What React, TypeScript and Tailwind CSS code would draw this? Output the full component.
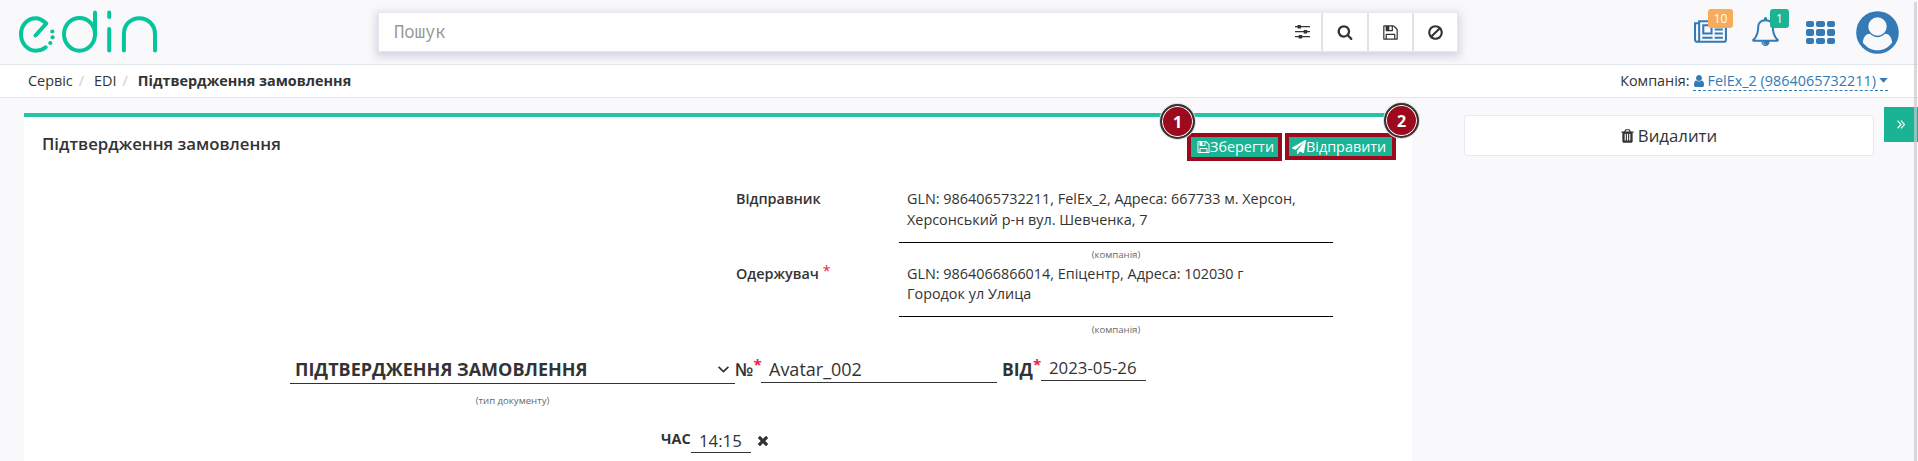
import React from "react";

const paths = {
  search: "M1216 832q0-185-131.500-316.500t-316.500-131.500-316.500 131.500-131.500 316.500 131.500 316.500 316.500 131.500 316.500-131.500 131.500-316.500zm512 832q0 52-38 90t-90 38q-54 0-90-38l-343-342q-179 124-399 124-143 0-273.500-55.500t-225-150-150-225-55.500-273.500 55.500-273.500 150-225 225-150 273.500-55.500 273.500 55.500 225 150 150 225 55.500 273.500q0 220-124 399l343 343q37 37 37 90z",
  save: "M384 1536h768v-384h-768v384zm896 0h128v-896q0-14-10-38.500t-20-34.500l-281-281q-10-10-34-20t-39-10v416q0 40-28 68t-68 28h-576q-40 0-68-28t-28-68v-416h-128v1280h128v-416q0-40 28-68t68-28h832q40 0 68 28t28 68v416zm-384-928v-320q0-13-9.500-22.500t-22.500-9.500h-192q-13 0-22.500 9.500t-9.500 22.500v320q0 13 9.500 22.500t22.500 9.500h192q13 0 22.500-9.500t9.500-22.500zm640 32v928q0 40-28 68t-68 28h-1344q-40 0-68-28t-28-68v-1344q0-40 28-68t68-28h928q40 0 88 20t76 48l280 280q28 28 48 76t20 88z",
  ban: "M1440 893q0-161-87-295l-754 753q137 89 297 89 111 0 211.500-43.500t173.500-116.500 116-174.500 43-212.500zm-999 299l755-754q-135-91-300-91-148 0-273 73t-198 199-73 274q0 162 89 299zm1223-299q0 157-61 300t-163.500 246-245 164-298.500 61-298.500-61-245-164-163.500-246-61-300 61-299.500 163.500-245.500 245-164 298.500-61 298.500 61 245 164 163.500 245.500 61 299.500z",
  news: "M1024 512h-384v384h384v-384zm128 640v128h-640v-128h640zm0-768v640h-640v-640h640zm640 768v128h-512v-128h512zm0-256v128h-512v-128h512zm0-256v128h-512v-128h512zm0-256v128h-512v-128h512zm-1536 960v-960h-128v960q0 26 19 45t45 19 45-19 19-45zm1664 0v-1088h-1536v1088q0 33-11 64h1483q26 0 45-19t19-45zm128-1216v1216q0 80-56 136t-136 56h-1664q-80 0-136-56t-56-136v-1088h256v-128h1792z",
  bell: "M912 1696q0-16-16-16-59 0-101.500-42.500t-42.500-101.500q0-16-16-16t-16 16q0 73 51.500 124.500t124.500 51.500q16 0 16-16zm-666-288h1300q-266-300-266-832 0-51-24-105t-69-103-121.500-80.500-169.500-31.500-169.500 31.500-121.500 80.500-69 103-24 105q0 532-266 832zm1482 0q0 52-38 90t-90 38h-448q0 106-75 181t-181 75-181-75-75-181h-448q-52 0-90-38t-38-90q50-42 91-88t85-119.500 74.500-158.500 50-206 19.500-260q0-152 117-282.500t307-158.500q-8-19-8-39 0-40 28-68t68-28 68 28 28 68q0 20-8 39 190 28 307 158.500t117 282.500q0 139 19.500 260t50 206 74.500 158.500 85 119.500 91 88z",
  user: "M1536 1399q0 109-62.500 187t-150.500 78h-854q-88 0-150.500-78t-62.500-187q0-85 8.500-160.500t31.500-152 58.500-131 94-89 134.500-34.500q131 128 313 128t313-128q76 0 134.500 34.500t94 89 58.500 131 31.500 152 8.500 160.500zm-256-887q0 159-112.500 271.500t-271.500 112.500-271.500-112.500-112.500-271.500 112.500-271.500 271.500-112.500 271.500 112.500 112.500 271.500z",
  trash: "M704 1376v-704q0-14-9-23t-23-9h-64q-14 0-23 9t-9 23v704q0 14 9 23t23 9h64q14 0 23-9t9-23zm256 0v-704q0-14-9-23t-23-9h-64q-14 0-23 9t-9 23v704q0 14 9 23t23 9h64q14 0 23-9t9-23zm256 0v-704q0-14-9-23t-23-9h-64q-14 0-23 9t-9 23v704q0 14 9 23t23 9h64q14 0 23-9t9-23zm-544-992h448l-48-117q-7-9-17-11h-317q-10 2-17 11zm928 32v64q0 14-9 23t-23 9h-96v948q0 83-47 143.500t-113 60.500h-832q-66 0-113-58.500t-47-141.500v-952h-96q-14 0-23-9t-9-23v-64q0-14 9-23t23-9h309l70-167q15-37 54-63t79-26h320q40 0 79 26t54 63l70 167h309q14 0 23 9t9 23z",
  plane: "M1764 11q33 24 27 64l-256 1536q-5 29-32 45-14 8-31 8-11 0-24-5l-453-185-242 295q-18 23-49 23-13 0-22-4-19-7-30.500-23.500t-11.500-36.500v-349l864-1059-1069 925-395-162q-37-14-40-55-2-40 32-59l1664-960q15-9 32-9 20 0 36 11z",
  times: "M1490 1322q0 40-28 68l-136 136q-28 28-68 28t-68-28l-294-294-294 294q-28 28-68 28t-68-28l-136-136q-28-28-28-68t28-68l294-294-294-294q-28-28-28-68t28-68l136-136q28-28 68-28t68 28l294 294 294-294q28-28 68-28t68 28l136 136q28 28 28 68t-28 68l-294 294 294 294q28 28 28 68z",
};

function Icon({ name, box = "0 0 1792 1792", className }: { name: keyof typeof paths; box?: string; className: string }) {
  return (
    <svg viewBox={box} fill="currentColor" className={"shrink-0 " + className}>
      <path d={paths[name]} />
    </svg>
  );
}

function Logo() {
  return (
    <svg width="140" height="46" viewBox="0 0 140 46" fill="none" stroke="#05c59a" strokeWidth="4" strokeLinecap="round" strokeLinejoin="round" className="ml-[18px] mt-[9px]">
      <path d="M17.5 26.5 28.300 14.500C24.500 10.800 21.500 9.200 17.800 9.200 9.300 9.200 3 16.500 3 25.300S9.300 41.700 17.800 41.700C21.500 41.700 24.800 40.700 27.700 38.300" />
      <g fill="#05c59a" stroke="none">
        <circle cx="34.300" cy="22.500" r="2.100" />
        <circle cx="34.600" cy="28.300" r="2.100" />
        <circle cx="32.300" cy="34" r="2.100" />
      </g>
      <ellipse cx="61.500" cy="25.300" rx="15.500" ry="16.400" />
      <path d="M77 3.500V25M91.200 3.500V8M91.200 20V41.500M105.900 41.500V25C105.900 16 112.500 9.200 121.300 9.200S137 16 137 25V41.500" />
    </svg>
  );
}

function Sliders() {
  return (
    <svg viewBox="0 0 15 14" fill="currentColor" className="h-[14px] w-[15px]">
      <path d="M0 1h15v1.200H0zM0 6h15v1.200H0zM0 11h15v1.200H0z" />
      <rect x="2.500" y="0" width="3.500" height="3.400" rx=".5" />
      <rect x="8.700" y="5" width="3.500" height="3.400" rx=".5" />
      <rect x="3.700" y="10" width="3.500" height="3.400" rx=".5" />
    </svg>
  );
}

const toolCell = "flex h-full items-center justify-center border-l-2 border-[#e2e3e6]";

function Header() {
  return (
    <header className="flex h-[65px] border-b border-[#e1e5ec]">
      <Logo />
      <div className="ml-[220px] mt-[12px] flex h-10 w-[1080px] items-stretch border border-[#e7e8ec] bg-white text-[#333] shadow-[0_3px_8px_2px_rgba(175,178,200,0.5)]">
        <div className="flex flex-1 items-center pl-[15px] font-['Noto_Sans_Mono','Liberation_Mono',monospace] text-[17.28px] text-[#999]">Пошук</div>
        <div className="flex w-[30px] items-center pl-[4px]"><Sliders /></div>
        <div className={toolCell + " w-[46px]"}><Icon name="search" className="h-4 w-4" /></div>
        <div className={toolCell + " w-[45px]"}><Icon name="save" box="0 0 1536 1792" className="h-[17px] w-[15px]" /></div>
        <div className={toolCell + " w-[45px]"}><Icon name="ban" className="h-[17px] w-[17px]" /></div>
      </div>
      <div className="ml-auto flex text-[#337ab7]">
        <div className="relative w-[58px]">
          <Icon name="news" box="0 0 2048 1792" className="mt-[18px] h-[29px] w-[33px]" />
          <span className="absolute left-[14px] top-[9px] flex h-[19px] w-[25px] items-center justify-center rounded-[3px] bg-[#f8ac59] text-xs text-white">10</span>
        </div>
        <div className="relative w-[54px]">
          <Icon name="bell" className="mt-[17px] -ml-px h-[29px] w-[29px]" />
          <span className="absolute left-[18px] top-[9px] flex h-[19px] w-[19px] items-center justify-center rounded-[3px] bg-[#1ab394] text-xs text-white">1</span>
        </div>
        <div className="mr-[21px] mt-[21px] grid h-[23px] w-[29px] grid-cols-3 gap-x-[2px] gap-y-[2px]">
          {Array.from({ length: 9 }, (_, i) => <i key={i} className="rounded-[2px] bg-[#337ab7]" />)}
        </div>
        <svg viewBox="0 0 43 43" className="mr-[19px] mt-[11px] h-[43px] w-[43px]">
          <circle cx="21.500" cy="21.500" r="21.300" fill="#337ab7" />
          <circle cx="21.500" cy="15.500" r="9.200" fill="#f9f9fb" />
          <path d="M6.800 31.500C7.500 26 10 22.700 14 22.700 18.500 27.300 24.500 27.300 29 22.700 33 22.700 35.500 26 36.200 31.500 32.500 36.500 27.500 39.300 21.500 39.300S10.500 36.500 6.800 31.500Z" fill="#f9f9fb" />
        </svg>
      </div>
    </header>
  );
}

function Party({ label, required, children }: { label: string; required?: boolean; children: React.ReactNode }) {
  return (
    <div className="ml-[712px] flex">
      <div className="w-[163px] leading-[21px] font-semibold">
        {label}{required && <sup className="-top-[3px] ml-1 text-[14px] leading-none font-normal text-[#ed1c40]">*</sup>}
      </div>
      <div className="w-[434px]">
        <div className={(required ? "h-[54px] pt-px leading-[20px]" : "h-[55px] leading-[21px]") + " border-b border-black pl-2"}>{children}</div>
        <div className={(required ? "pt-[6px]" : "pt-[5px]") + " text-center text-[9.600px] leading-[13px] text-[#676a6c]"}>(компанія)</div>
        {!required && <div className="h-[2px]" />}
      </div>
    </div>
  );
}

const field = "border-b border-[#333] pl-2";
const star = "text-[15px] leading-[14px] font-bold text-[#ed1c40]";
const marker = "absolute flex h-[35px] w-[35px] items-center justify-center rounded-full border-2 border-[#333] bg-[#9b0b1d] text-base font-bold shadow-[inset_0_0_0_1px_white,0_0_0_1px_#ddd]";

export default function App() {
  return (
    <div className="relative h-[461px] w-[1918px] overflow-hidden bg-[#f9f9fb] font-['Open_Sans',sans-serif] text-[14.400px] text-[#333]">
      <Header />
      <nav className="flex h-[33px] items-center border-b border-[#e1e5ec] bg-white pl-7 pr-[30px]">
        <span>Сервіс</span>
        <span className="ml-[6px] text-[#ccc]">/</span>
        <span className="ml-[10px]">EDI</span>
        <span className="ml-[6px] text-[#ccc]">/</span>
        <b className="ml-[10px] font-bold">Підтвердження замовлення</b>
        <span className="ml-auto">Компанія:</span>
        <span className="ml-[3px] flex h-[20px] items-center border-b border-dashed border-[#337ab7] text-[#337ab7]">
          <Icon name="user" box="128 0 1536 1792" className="mr-[3px] h-[14px] w-[12px]" />FelEx_2 (9864065732211)
          <svg width="9" height="5" viewBox="0 0 9 5" fill="currentColor" className="ml-[3px]"><path d="M.3 0h8.400L4.500 4.700z" /></svg>
        </span>
      </nav>
      <div className="flex">
        <main className="ml-6 mt-[15px] h-[348px] w-[1388px] border-t-4 border-[#23c6a4] bg-white">
          <div className="flex h-[71px] items-start">
            <h1 className="ml-[18px] mt-[15px] text-[16.800px] leading-[23px] font-semibold">Підтвердження замовлення</h1>
            <div className="relative ml-auto mr-[3px] mt-4 flex h-7 w-[95px] items-center border-4 border-[#9b0b1d] bg-[#1ab394] pl-[6px] text-white">
              <Icon name="save" box="0 0 1536 1792" className="h-[14px] w-[13px]" />Зберегти
              <span className={marker + " -left-[31px] -top-[33px]"}>1</span>
            </div>
            <div className="relative mr-4 mt-4 flex h-[27px] w-[111px] items-center border-4 border-[#9b0b1d] bg-[#1ab394] pl-[3px] text-white">
              <Icon name="plane" className="h-[14px] w-[14px]" />Відправити
              <span className={marker + " -top-[34px] left-[95px]"}>2</span>
            </div>
          </div>
          <Party label="Відправник">GLN: 9864065732211, FelEx_2, Адреса: 667733 м. Херсон,<br />Херсонський р-н вул. Шевченка, 7</Party>
          <Party label="Одержувач" required>GLN: 9864066866014, Епіцентр, Адреса: 102030 г<br />Городок ул Улица</Party>
          <div className="ml-[266px] mt-[21px] flex h-[51px] items-start text-lg leading-[24px]">
            <div className="w-[445px]">
              <div className={field + " flex h-[27px] items-start justify-between !pl-[5px] pr-[6px] font-bold"}>
                <span className="text-[18px]">ПІДТВЕРДЖЕННЯ ЗАМОВЛЕННЯ</span>
                <svg width="11" height="7" viewBox="0 0 11 7" fill="none" stroke="#333" strokeWidth="1.700" className="mt-[9px]"><path d="m.6.8 4.900 4.800L10.400.8" /></svg>
              </div>
              <div className="pt-[10px] text-center text-[9.600px] leading-[13px] text-[#676a6c]">(тип документу)</div>
            </div>
            <div className="flex w-[26px] items-start font-semibold">№<span className={star}>*</span></div>
            <div className={field + " h-[26px] w-[236px]"}>Avatar_002</div>
            <div className="ml-[5px] flex w-[39px] items-start text-[17.500px] font-bold">ВІД<span className={star}>*</span></div>
            <div className={field + " h-6 w-[105px] text-[16.800px] leading-[22px]"}>2023-05-26</div>
          </div>
          <div className="ml-[637px] mt-[21px] flex items-start">
            <div className="w-[30px] leading-[20px] font-bold">ЧАС</div>
            <div className={field + " h-6 w-[60px] text-[16.800px] leading-[23px]"}>14:15</div>
            <Icon name="times" box="302 366 1188 1188" className="ml-[7px] mt-[7px] h-[10px] w-[10px]" />
          </div>
        </main>
        <aside className="ml-[52px] mt-[17px] flex h-[41px] w-[410px] items-center justify-center gap-[4px] rounded-[3px] border border-[#e7eaec] bg-white pt-px text-[16.800px]">
          <Icon name="trash" box="192 0 1408 1792" className="h-4 w-[13px]" />Видалити
        </aside>
        <div className="ml-[10px] mt-[9px] flex h-[35px] w-[34px] items-center justify-center bg-[#1ab394]">
          <svg width="8" height="9" viewBox="0 0 8 9" fill="none" stroke="white" strokeWidth="1.200"><path d="m.5.700 3.500 3.800-3.500 3.800M4 .7l3.500 3.800L4 8.300" /></svg>
        </div>
      </div>
      <i className="absolute right-[1px] top-[2px] h-[459px] w-[3px] bg-[#c9cacc]/70" />
    </div>
  );
}
